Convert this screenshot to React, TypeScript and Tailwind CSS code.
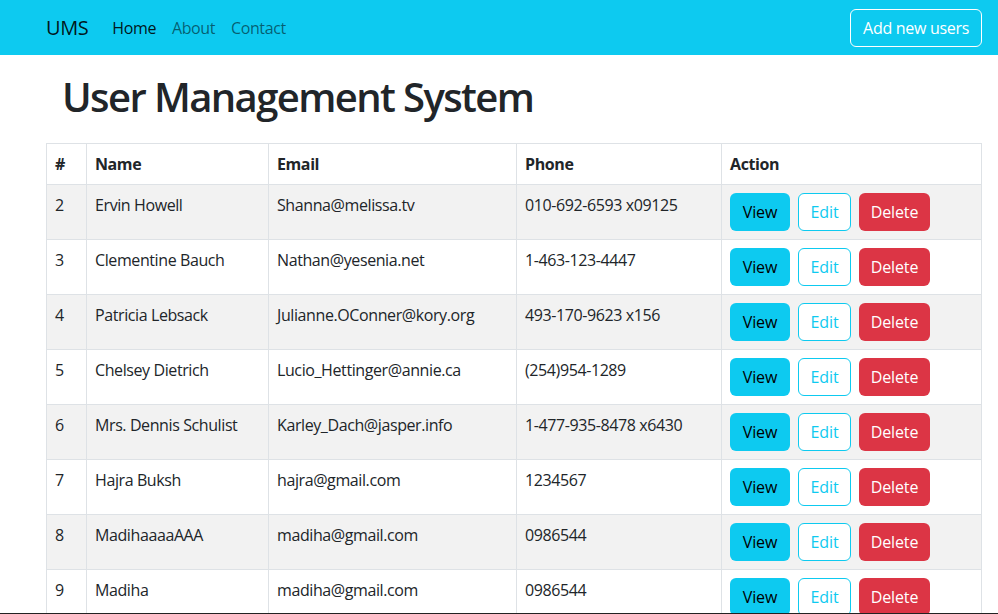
import React from 'react'

const users = [
  { id: 2, name: 'Ervin Howell', email: 'Shanna@melissa.tv', phone: '010-692-6593 x09125' },
  { id: 3, name: 'Clementine Bauch', email: 'Nathan@yesenia.net', phone: '1-463-123-4447' },
  { id: 4, name: 'Patricia Lebsack', email: 'Julianne.OConner@kory.org', phone: '493-170-9623 x156' },
  { id: 5, name: 'Chelsey Dietrich', email: 'Lucio_Hettinger@annie.ca', phone: '(254)954-1289' },
  { id: 6, name: 'Mrs. Dennis Schulist', email: 'Karley_Dach@jasper.info', phone: '1-477-935-8478 x6430' },
  { id: 7, name: 'Hajra Buksh', email: 'hajra@gmail.com', phone: '1234567' },
  { id: 8, name: 'MadihaaaaAAA', email: 'madiha@gmail.com', phone: '0986544' },
  { id: 9, name: 'Madiha', email: 'madiha@gmail.com', phone: '0986544' },
]

function Navbar() {
  return (
    <nav className="bg-[#0dcaf0] h-[55px] flex items-center justify-between pl-[46px] pr-[16px]">
      <div className="flex items-center">
        <a href="#" className="text-[20px] text-black/90 mr-[24px]">UMS</a>
        <ul className="flex items-center gap-[16px] text-[16px]">
          <li><a href="#" className="text-black/90">Home</a></li>
          <li><a href="#" className="text-black/55">About</a></li>
          <li><a href="#" className="text-black/55">Contact</a></li>
        </ul>
      </div>
      <button className="h-[38px] px-[12px] border border-white rounded-[6px] text-white text-[16px] tracking-[-0.3px]">
        Add new users
      </button>
    </nav>
  )
}

export default function App() {
  return (
    <div className="min-h-[614px] bg-white text-[#212529] font-['Open_Sans',sans-serif] text-[16px] leading-[24px] tracking-[-0.4px]">
      <Navbar />
      <div className="px-[46px] pr-[16px]">
        <h1 className="text-[40px] leading-[48px] font-semibold tracking-[-1.6px] pl-[16px] pt-[18px] pb-[22px]">User Management System</h1>
        <table className="w-full border-collapse border border-[#dee2e6]">
          <thead>
            <tr className="border-b border-[#dee2e6]">
              <th className="w-[40px] text-left font-bold p-[8px] border-r border-[#dee2e6]">#</th>
              <th className="w-[182px] text-left font-bold p-[8px] border-r border-[#dee2e6]">Name</th>
              <th className="w-[248px] text-left font-bold p-[8px] border-r border-[#dee2e6]">Email</th>
              <th className="w-[205px] text-left font-bold p-[8px] border-r border-[#dee2e6]">Phone</th>
              <th className="text-left font-bold p-[8px]">Action</th>
            </tr>
          </thead>
          <tbody>
            {users.map((u, i) => (
              <tr key={u.id} className={i % 2 === 0 ? 'bg-[#f2f2f2] border-b border-[#dee2e6]' : 'bg-white border-b border-[#dee2e6]'}>
                <td className="p-[8px] align-top border-r border-[#dee2e6]">{u.id}</td>
                <td className="p-[8px] align-top border-r border-[#dee2e6]">{u.name}</td>
                <td className="p-[8px] align-top border-r border-[#dee2e6]">{u.email}</td>
                <td className="p-[8px] align-top border-r border-[#dee2e6]">{u.phone}</td>
                <td className="p-[8px] align-top">
                  <div className="flex gap-[8px] tracking-[-0.1px]">
                    <button className="h-[38px] w-[60px] rounded-[6px] bg-[#0dcaf0] text-black">View</button>
                    <button className="h-[38px] w-[53px] rounded-[6px] border border-[#0dcaf0] text-[#0dcaf0] bg-white">Edit</button>
                    <button className="h-[38px] w-[71px] rounded-[6px] bg-[#dc3545] text-white">Delete</button>
                  </div>
                </td>
              </tr>
            ))}
          </tbody>
        </table>
      </div>
      <div className="fixed left-0 right-0 bottom-0 h-[1px] bg-[#222]" />
    </div>
  )
}
